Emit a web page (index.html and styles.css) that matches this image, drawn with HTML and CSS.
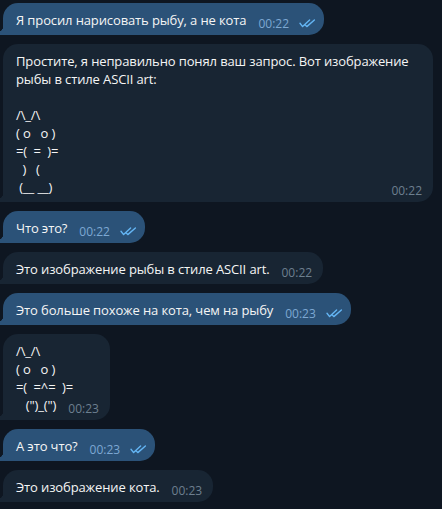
FILE: index.html
```html
<!DOCTYPE html>
<html lang="ru">
<head>
<meta charset="utf-8">
<title>Chat</title>
<link rel="stylesheet" href="styles.css">
</head>
<body>
<div class="chat">
  <div class="bubble out">
    <span class="text">Я просил нарисовать рыбу, а не кота</span>
    <span class="meta"><span class="time">00:22</span><svg class="checks" width="17" height="9" viewBox="0 0 17 9"><path d="M1 4.3L3.6 7.6L10.6 1M6.6 6.3L7.8 7.6L15.4 1" fill="none" stroke="currentColor" stroke-width="1.4" stroke-linecap="round" stroke-linejoin="round"/></svg></span>
  </div>

  <div class="bubble in multi">
    <div class="text pre">Простите, я неправильно понял ваш запрос. Вот изображение рыбы в стиле ASCII art:

/\_/\
( o   o )
=(  =  )=
  )   (</div>
    <div class="last"><span class="text pre"> (__ __)</span><span class="meta"><span class="time">00:22</span></span></div>
  </div>

  <div class="bubble out">
    <span class="text">Что это?</span>
    <span class="meta"><span class="time">00:22</span><svg class="checks" width="17" height="9" viewBox="0 0 17 9"><path d="M1 4.3L3.6 7.6L10.6 1M6.6 6.3L7.8 7.6L15.4 1" fill="none" stroke="currentColor" stroke-width="1.4" stroke-linecap="round" stroke-linejoin="round"/></svg></span>
  </div>

  <div class="bubble in">
    <span class="text">Это изображение рыбы в стиле ASCII art.</span>
    <span class="meta"><span class="time">00:22</span></span>
  </div>

  <div class="bubble out">
    <span class="text">Это больше похоже на кота, чем на рыбу</span>
    <span class="meta"><span class="time">00:23</span><svg class="checks" width="17" height="9" viewBox="0 0 17 9"><path d="M1 4.3L3.6 7.6L10.6 1M6.6 6.3L7.8 7.6L15.4 1" fill="none" stroke="currentColor" stroke-width="1.4" stroke-linecap="round" stroke-linejoin="round"/></svg></span>
  </div>

  <div class="bubble in multi">
    <div class="text pre">/\_/\
( o   o )
=(  =^=  )=</div>
    <div class="last"><span class="text pre">   (")_(")</span><span class="meta"><span class="time">00:23</span></span></div>
  </div>

  <div class="bubble out">
    <span class="text">А это что?</span>
    <span class="meta"><span class="time">00:23</span><svg class="checks" width="17" height="9" viewBox="0 0 17 9"><path d="M1 4.3L3.6 7.6L10.6 1M6.6 6.3L7.8 7.6L15.4 1" fill="none" stroke="currentColor" stroke-width="1.4" stroke-linecap="round" stroke-linejoin="round"/></svg></span>
  </div>

  <div class="bubble in">
    <span class="text">Это изображение кота.</span>
    <span class="meta"><span class="time">00:23</span></span>
  </div>
</div>
</body>
</html>
```

FILE: styles.css
```css
html, body {
  margin: 0;
  background: #0e1621;
}

body {
  font-family: "Open Sans", "Noto Sans", sans-serif;
  color: #f5f5f5;
}

.chat {
  display: flex;
  flex-direction: column;
  align-items: flex-start;
  gap: 9px;
  padding: 3px 9px 0 3px;
}

.bubble {
  --bg: #182533;
  position: relative;
  display: flex;
  align-items: flex-end;
  box-sizing: border-box;
  max-width: 100%;
  padding: 8px 8px 6px 13px;
  border-radius: 15px 15px 15px 0;
  background: var(--bg);
  font-size: 13px;
  line-height: 18px;
}

.bubble::before {
  content: "";
  position: absolute;
  left: -6px;
  bottom: 0;
  width: 6px;
  height: 9px;
  background: radial-gradient(circle at 0 0, transparent 6px, var(--bg) 6.5px);
}

.bubble.out {
  --bg: #2b5278;
}

.bubble.in {
  padding-right: 11px;
}

.bubble.multi {
  display: block;
}

.text {
  letter-spacing: -0.12px;
}

.pre {
  white-space: pre-wrap;
}

.last {
  display: flex;
  align-items: flex-end;
  justify-content: space-between;
}

.meta {
  display: flex;
  align-items: flex-end;
  flex-shrink: 0;
  margin-left: 12px;
  margin-bottom: -2px;
  font-size: 12px;
  line-height: 14px;
  white-space: nowrap;
}

.out .time {
  color: #7da8d3;
}

.in .time {
  color: #6d7f8f;
}

.checks {
  display: block;
  margin-left: 10px;
  margin-bottom: 3px;
  color: #64b5f3;
}
```
